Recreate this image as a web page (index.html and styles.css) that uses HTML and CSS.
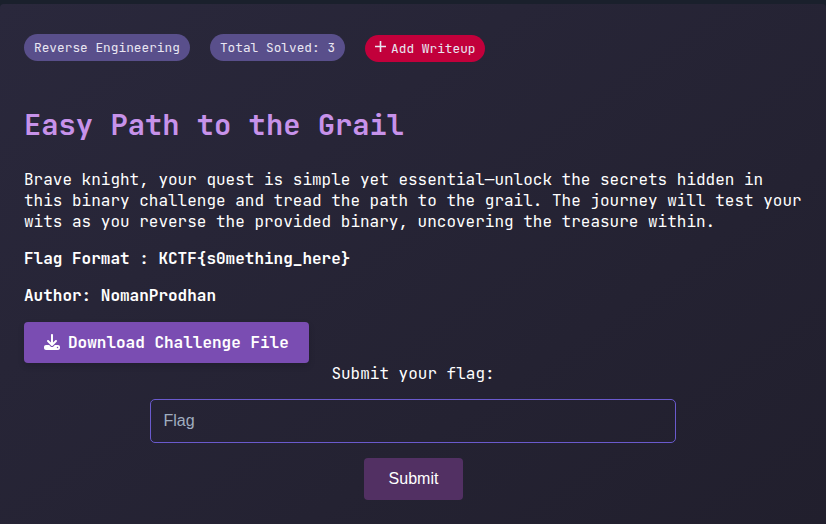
FILE: index.html
```html
<!DOCTYPE html>
<html lang="en">
<head>
<meta charset="utf-8">
<title>Easy Path to the Grail</title>
<link rel="stylesheet" href="styles.css">
</head>
<body>
<main class="challenge">
  <div class="tags">
    <span class="tag">Reverse Engineering</span>
    <span class="tag">Total Solved: 3</span>
    <a class="tag tag-add"><svg class="plus" viewBox="0 0 11 11"><path d="M5.500 0v11M0 5.500h11" stroke="currentColor" stroke-width="1.600" fill="none"/></svg>Add Writeup</a>
  </div>
  <h1>Easy Path to the Grail</h1>
  <p>Brave knight, your quest is simple yet essential—unlock the secrets hidden in this binary challenge and tread the path to the grail. The journey will test your wits as you reverse the provided binary, uncovering the treasure within.</p>
  <p class="strong">Flag Format : KCTF{s0mething_here}</p>
  <p class="strong">Author: NomanProdhan</p>
  <a class="download"><svg class="icon" viewBox="0 0 512 512"><path fill="currentColor" d="M288 32c0-17.700-14.300-32-32-32s-32 14.300-32 32v242.700l-73.400-73.400c-12.500-12.500-32.800-12.500-45.300 0s-12.500 32.800 0 45.300l128 128c12.500 12.500 32.800 12.500 45.300 0l128-128c12.500-12.500 12.500-32.800 0-45.300s-32.800-12.500-45.300 0L288 274.700V32zM64 352c-35.300 0-64 28.700-64 64v32c0 35.300 28.700 64 64 64h384c35.300 0 64-28.700 64-64v-32c0-35.300-28.700-64-64-64H346.500l-45.300 45.300c-25 25-65.500 25-90.500 0L165.500 352H64zm368 56a24 24 0 1 1 0 48 24 24 0 1 1 0-48z"/></svg>Download Challenge File</a>
  <form class="submission">
    <label for="flag">Submit your flag:</label>
    <input id="flag" type="text" placeholder="Flag">
    <button type="button">Submit</button>
  </form>
</main>
</body>
</html>
```
FILE: styles.css
```css
* { box-sizing: border-box; }
body {
  margin: 0;
  height: 524px;
  padding-top: 4px;
  overflow: hidden;
  background: #1a202c;
  color: #fff;
  font: 16px/21px "JetBrains Mono", "DejaVu Sans Mono", monospace;
}
.challenge {
  height: 520px;
  padding: 30px 24px 0;
  border-radius: 4px 4px 0 0;
  background: linear-gradient(145deg, #2a283c, #211f2d);
}
.tags { display: flex; gap: 20px; height: 28px; align-items: flex-start; }
.tag {
  display: flex;
  height: 27px;
  padding: 5px 10px;
  border-radius: 14px;
  background: #594f8b;
  color: #e9e6f2;
  font-size: 12.8px;
  line-height: 17px;
  white-space: nowrap;
}
.tag-add { margin-top: 1px; padding-right: 9.5px; background: #c2003b; }
.plus { width: 11px; height: 11px; margin: 1px 5px 0 0; }
h1 {
  margin: 44px 0 24px;
  color: #c792ea;
  font-size: 28.8px;
  font-weight: 600;
  line-height: 39px;
}
p { margin: 0 0 16px; }
.strong { font-weight: 700; }
.download {
  display: flex;
  align-items: center;
  width: 285px;
  height: 41px;
  padding: 0 20px;
  border-radius: 4px;
  background: #7a4db2;
  box-shadow: 0 3px 6px rgba(0, 0, 0, .15);
  font-weight: 700;
  white-space: nowrap;
}
.icon { width: 16px; height: 16px; margin: 0 8px 2px 0; flex: none; }
.submission { display: flex; flex-direction: column; align-items: center; }
.submission input {
  width: 526px;
  height: 44px;
  margin: 15px 0;
  padding: 0 12.5px;
  border: 1px solid #6a5acd;
  border-radius: 5px;
  background: transparent;
  color: #fff;
  font: 16px "Liberation Sans", sans-serif;
}
.submission input::placeholder { color: #a0aec0; }
.submission button {
  width: 99px;
  height: 42px;
  padding: 0 0 0 1px;
  border: 0;
  border-radius: 4px;
  background: #523063;
  color: #fff;
  font: 16px "Liberation Sans", sans-serif;
}
```
